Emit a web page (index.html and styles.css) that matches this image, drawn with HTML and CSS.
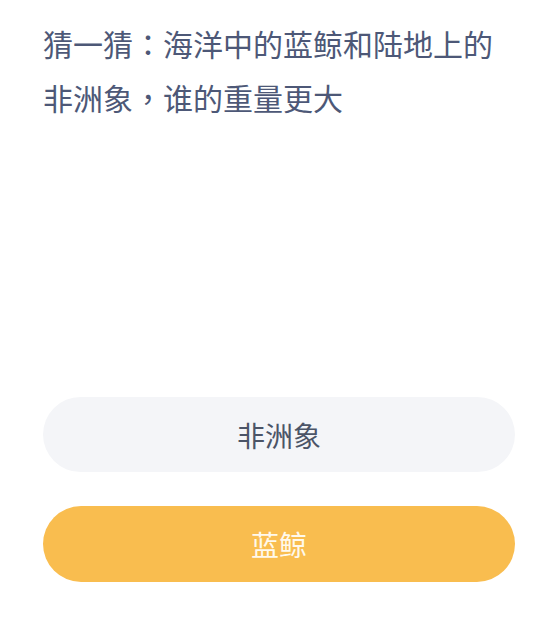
FILE: index.html
```html
<!DOCTYPE html>
<html lang="zh-CN">
<head>
<meta charset="utf-8">
<title>猜一猜</title>
<link rel="stylesheet" href="styles.css">
</head>
<body>
<main class="quiz">
  <h1 class="question">猜一猜<span class="punct" lang="zh-Hant-TW">：</span>海洋中的蓝鲸和陆地上的非洲象<span class="punct" lang="zh-Hant-TW">，</span>谁的重量更大</h1>
  <div class="options">
    <button class="option option-plain">非洲象</button>
    <button class="option option-selected">蓝鲸</button>
  </div>
</main>
</body>
</html>
```

FILE: styles.css
```css
html, body {
  margin: 0;
  padding: 0;
  background: #ffffff;
}
body {
  width: 554px;
  height: 639px;
  overflow: hidden;
  font-family: "Noto Sans CJK SC", "Noto Sans", sans-serif;
}
.quiz {
  display: flex;
  flex-direction: column;
  padding: 16px 40px 0 43px;
}
.question {
  margin: 0;
  font-size: 30px;
  font-weight: 400;
  line-height: 54px;
  color: #4d5877;
}
.punct {
  font-family: "Noto Sans CJK TC", sans-serif;
}
.options {
  margin-top: 273px;
  display: flex;
  flex-direction: column;
  gap: 34px;
  margin-right: -1px;
}
.option {
  display: flex;
  align-items: center;
  justify-content: center;
  width: 472px;
  border: none;
  border-radius: 38px;
  font-family: "Noto Sans CJK SC", "Noto Sans", sans-serif;
  font-size: 28px;
  font-weight: 400;
  padding: 0;
}
.option-plain {
  height: 75px;
  background: #f4f5f8;
  color: #4b5467;
}
.option-selected {
  height: 76px;
  background: #f9bd4f;
  color: #fff9ec;
}
```
